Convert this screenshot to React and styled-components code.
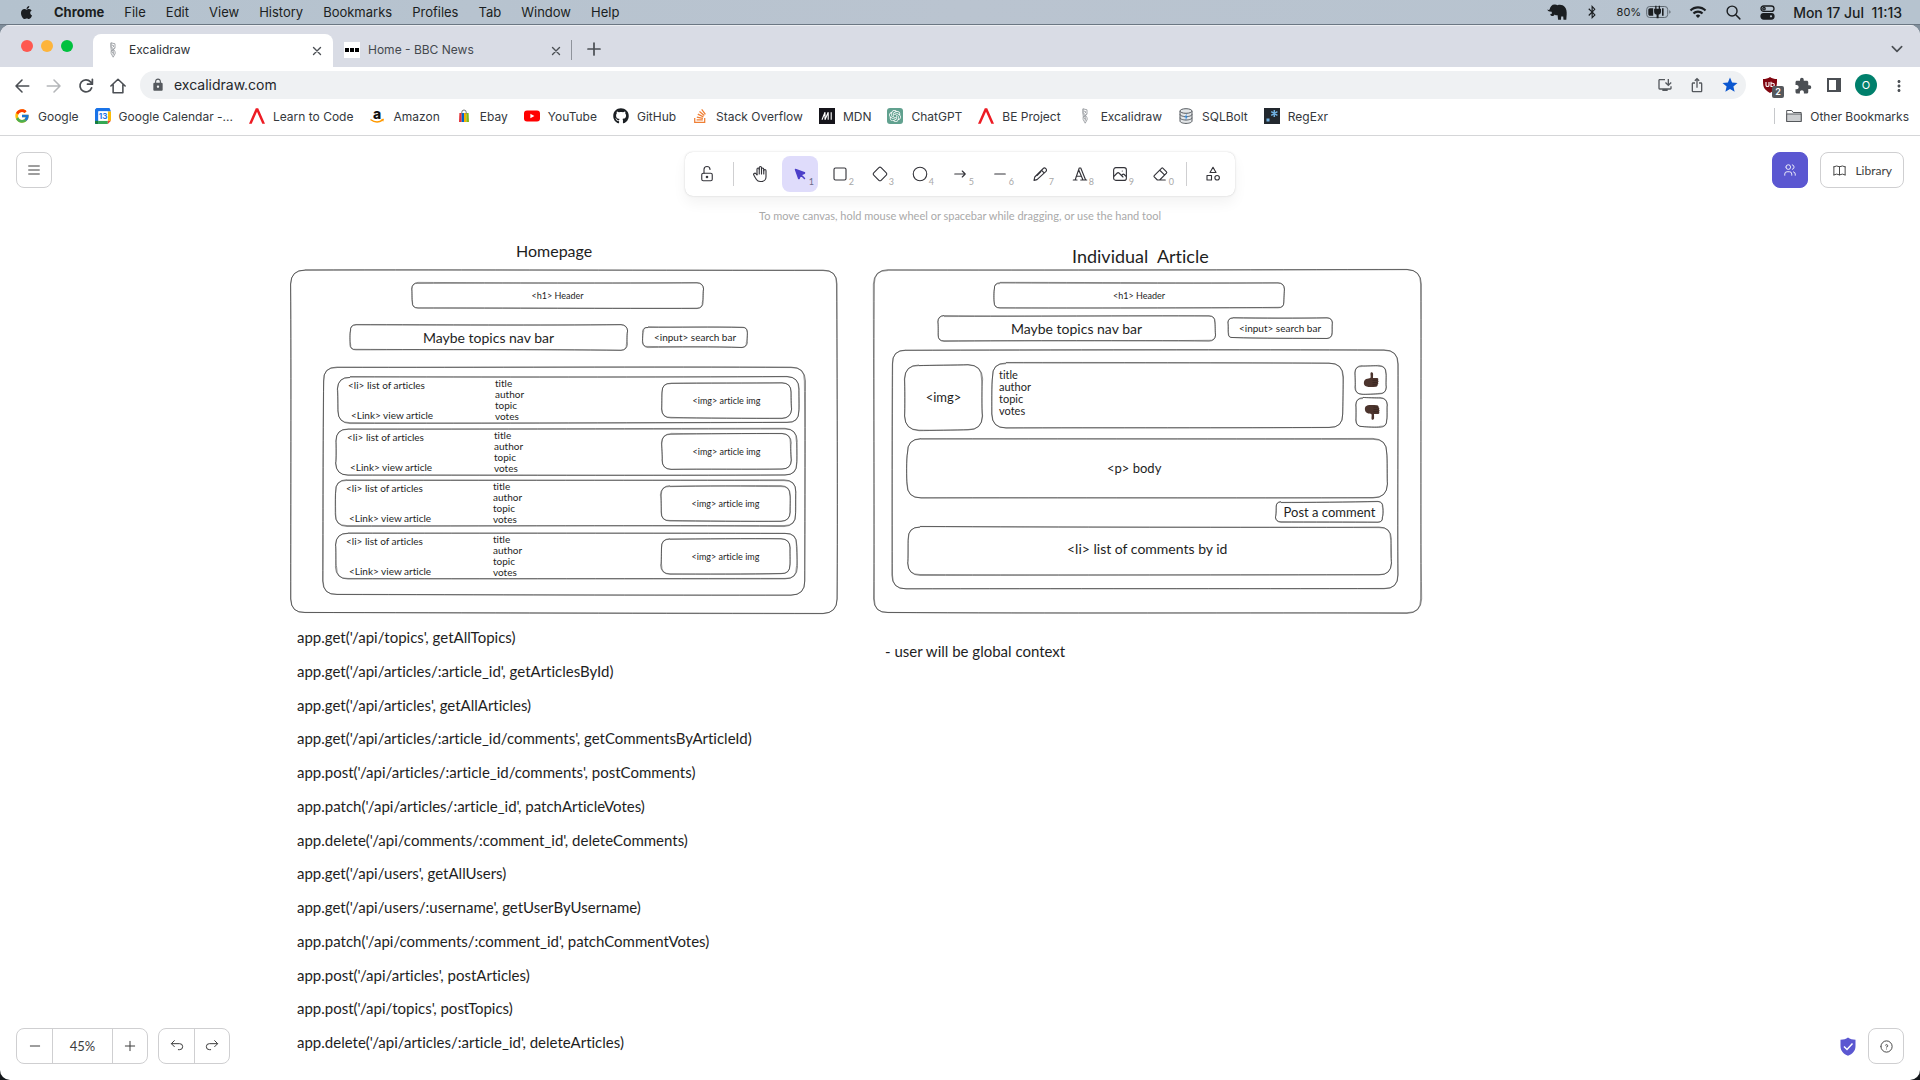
import React from "react";
import styled, { createGlobalStyle, css } from "styled-components";
import {
  TbLockOpen,
  TbHandStop,
  TbMenu2,
  TbUsers,
  TbBook,
  TbMinus,
  TbPlus,
  TbHelpCircle,
} from "react-icons/tb";
import { FcGoogle } from "react-icons/fc";
import { FaApple, FaStackOverflow, FaGithub, FaBluetoothB } from "react-icons/fa";
import { SiOpenai } from "react-icons/si";
import { MdStar, MdLock, MdWifi, MdMoreVert, MdInstallDesktop, MdIosShare, MdExtension } from "react-icons/md";

const SYSTEM = `Inter, "Liberation Sans", sans-serif`;
const UI = `Lato, "Open Sans", sans-serif`;
const HAND = `Lato, "Open Sans", sans-serif`;

const GlobalStyle = createGlobalStyle`
  *, *::before, *::after { box-sizing: border-box; }
  body { margin: 0; background: #14171b; font-family: ${SYSTEM}; }
  button, input { font: inherit; color: inherit; }
  button { border: 0; padding: 0; background: none; cursor: pointer; }
  a { color: inherit; text-decoration: none; }
  svg { display: block; flex: none; overflow: visible; }
`;

/* ---------- desktop and window ---------- */

const Desktop = styled.div`
  min-height: 100vh;
  display: flex;
  flex-direction: column;
`;

const MenuBar = styled.header`
  height: 25px;
  padding: 0 18px 0 19px;
  display: flex;
  align-items: center;
  justify-content: space-between;
  background: linear-gradient(90deg, #b4c2ce, #bac4d0 50%, #b6c3cf);
  border-bottom: 1px solid #6b7783;
  color: #1b1e21;
  font-size: 13px;
`;

const MenuGroup = styled.nav`
  display: flex;
  align-items: center;
  gap: 20px;
`;

const MenuItem = styled.button`
  font-weight: ${(p) => (p.$strong ? 700 : 400)};
  white-space: nowrap;
`;

const StatusGroup = styled.div`
  display: flex;
  align-items: center;
  gap: 18px;
  white-space: nowrap;
`;

const Battery = styled.span`
  display: flex;
  align-items: center;
  gap: 5px;
  font-size: 11px;
`;

const ClockText = styled.time`
  font-size: 14px;
  font-weight: 500;
  white-space: pre;
`;

const CornerBack = styled.div`
  flex: 1;
  display: flex;
  flex-direction: column;
  background: linear-gradient(#7f8d9a 0 50%, #14171b 50%);
`;

const Window = styled.div`
  flex: 1;
  display: flex;
  flex-direction: column;
  border-radius: 10px;
  overflow: hidden;
  background: #fff;
`;

const TabStrip = styled.div`
  height: 42px;
  padding: 8px 15px 0 21px;
  display: flex;
  background: #d9dce5;
  border-top: 1px solid #eceef2;
`;

const Lights = styled.div`
  display: flex;
  gap: 8px;
  padding-top: 6px;
  margin-right: 20px;
`;

const Light = styled.button`
  width: 12px;
  height: 12px;
  border-radius: 50%;
  background: ${(p) => p.$color};
`;

const Tab = styled.div`
  width: ${(p) => (p.$active ? 240 : 238)}px;
  height: 34px;
  padding: 0 ${(p) => (p.$active ? 11 : 10)}px 3px ${(p) => (p.$active ? 12 : 11)}px;
  display: flex;
  align-items: center;
  gap: 8px;
  border-radius: 8px 8px 0 0;
  background: ${(p) => (p.$active ? "#fff" : "transparent")};
  color: ${(p) => (p.$active ? "#2f3337" : "#44484e")};
  font-size: 12px;
`;

const TabTitle = styled.span`
  flex: 1;
`;

const TabEdge = styled.span`
  width: 1px;
  height: 20px;
  margin: 6px 14px 0 0;
  background: #8f939b;
`;

const PlainButton = styled.button`
  display: grid;
  place-items: center;
  width: ${(p) => p.$size || 16}px;
  height: ${(p) => p.$size || 16}px;
  color: ${(p) => p.$color || "#4b4f54"};
`;

const StripEnd = styled.div`
  flex: 1;
  display: flex;
  justify-content: space-between;
  align-items: center;
  padding-bottom: 3px;
`;

const Toolbar = styled.div`
  height: 36px;
  padding: 0 14px 1px 13px;
  display: flex;
  align-items: center;
  gap: 16px;
`;

const Omnibox = styled.label`
  flex: 1;
  height: 28px;
  margin-left: -1px;
  padding: 0 7px 0 11px;
  display: flex;
  align-items: center;
  gap: 16px;
  border-radius: 14px;
  background: #eff1f3;
  color: #55595e;
`;

const Address = styled.span`
  flex: 1;
  display: flex;
  align-items: center;
  gap: 9px;
`;

const UrlInput = styled.input`
  flex: 1;
  min-width: 0;
  height: 28px;
  padding: 0;
  border: 0;
  outline: 0;
  background: none;
  color: #24272b;
  font-size: 14px;
  line-height: 20px;
`;

const ExtensionIcon = styled.button`
  position: relative;
  width: 16px;
  height: 18px;
`;

const ExtensionBadge = styled.span`
  position: absolute;
  left: 10px;
  top: 10px;
  width: 12px;
  height: 12px;
  border-radius: 2px;
  background: #55585c;
  color: #fff;
  font-size: 9px;
  font-weight: 600;
  line-height: 12px;
  text-align: center;
`;

const Avatar = styled.button`
  width: 22px;
  height: 22px;
  margin: 0 -3px;
  border-radius: 50%;
  background: #00806c;
  color: #fff;
  font-size: 11px;
`;

const BookmarkBar = styled.nav`
  height: 33px;
  padding: 0 11px 6px 14px;
  display: flex;
  align-items: center;
  gap: 16px;
  border-bottom: 1px solid #d5d6d8;
  color: #34383d;
  font-size: 12px;
`;

const Bookmark = styled.a`
  display: flex;
  align-items: center;
  gap: 8px;
  white-space: nowrap;
`;

const OtherBookmarks = styled(Bookmark)`
  margin-left: auto;
  padding-left: 11px;
  border-left: 1px solid #c6c8cb;
`;

/* ---------- whiteboard ---------- */

const Board = styled.main`
  position: relative;
  flex: 1;
  min-height: 944px;
  display: flex;
  flex-direction: column;
  justify-content: space-between;
  padding: 16px;
  font-family: ${UI};
`;

const Scene = styled.div`
  position: absolute;
  inset: 0;
  overflow: hidden;
  color: #1e1e1e;
  font-family: ${HAND};
  font-variant-ligatures: none;
`;

const Node = styled.div`
  position: absolute;
  left: ${(p) => p.$x}px;
  top: ${(p) => p.$y}px;
  width: ${(p) => p.$w}px;
  height: ${(p) => p.$h}px;
  display: grid;
  place-items: center;
  font-size: ${(p) => p.$size || 10}px;
  line-height: 1;
  white-space: nowrap;
`;

const Outline = styled.svg`
  position: absolute;
  inset: 0;
  overflow: visible;
  fill: none;
  stroke: #1e1e1e;
`;

const Note = styled.div`
  position: absolute;
  left: ${(p) => p.$x}px;
  top: ${(p) => p.$y}px;
  font-size: ${(p) => p.$size}px;
  line-height: ${(p) => p.$line || 20}px;
  white-space: pre;
`;

const TopRow = styled.div`
  position: relative;
  display: grid;
  grid-template-columns: 1fr auto 1fr;
  align-items: start;
`;

const BottomRow = styled.div`
  position: relative;
  display: flex;
  gap: 10px;
  align-items: center;
`;

const outlined = css`
  border: 1px solid #cfcfd1;
  border-radius: 8px;
  background: #fff;
  color: #3d3d3d;
`;

const BoxButton = styled.button`
  ${outlined}
  min-width: 36px;
  height: 36px;
  padding: 0 ${(p) => (p.$wide ? 11 : 0)}px;
  display: flex;
  align-items: center;
  justify-content: center;
  gap: 8px;
  font-size: 12px;
`;

const ShareButton = styled(BoxButton)`
  border-color: #5b57d1;
  background: #5b57d1;
  color: #fff;
`;

const RightTools = styled.div`
  display: flex;
  justify-content: flex-end;
  gap: 12px;
`;

const CenterTools = styled.div`
  display: flex;
  flex-direction: column;
  align-items: center;
  gap: 12px;
`;

const ToolIsland = styled.div`
  display: flex;
  gap: 4px;
  padding: 4px;
  border-radius: 8px;
  background: #fff;
  box-shadow: 0 0 1px rgba(0, 0, 0, 0.18), 0 0 3px rgba(0, 0, 0, 0.08), 0 7px 14px rgba(0, 0, 0, 0.05);
`;

const ToolButton = styled.button`
  position: relative;
  width: 36px;
  height: 36px;
  display: grid;
  place-items: center;
  border-radius: 8px;
  background: ${(p) => (p.$active ? "#dfdcfb" : "transparent")};
  color: ${(p) => (p.$active ? "#4c3fc9" : "#34343a")};
`;

const KeyHint = styled.span`
  position: absolute;
  right: 4px;
  bottom: 4px;
  color: ${(p) => (p.$active ? "#6d6a86" : "#a8a8a8")};
  font-size: 9px;
  line-height: 12px;
`;

const Divider = styled.span`
  width: 1px;
  height: 24px;
  margin: 6px 4px;
  background: #cfcfd1;
`;

const Hint = styled.p`
  margin: 0;
  color: #a9a9a9;
  font-size: 11px;
  line-height: 16px;
  white-space: nowrap;
`;

const Segmented = styled.div`
  ${outlined}
  display: flex;
  height: 36px;
`;

const Segment = styled.button`
  width: ${(p) => p.$w || 35}px;
  display: grid;
  place-items: center;
  font-size: 13px;
  & + & { border-left: 1px solid #cfcfd1; }
`;

const Shield = styled.a`
  margin-left: auto;
  margin-right: 2px;
`;

/* ---------- drawings ---------- */

const Stroke = ({ size = 18, width = 1.5, children }) => (
  <svg width={size} height={size} viewBox="0 0 24 24" fill="none" stroke="currentColor" strokeWidth={width} strokeLinecap="round" strokeLinejoin="round">
    {children}
  </svg>
);

const Elephant = () => (
  <svg width="20" height="18" viewBox="0 0 20 18" fill="#1b1e21">
    <path d="M.3 6.2c.6.7 1.500.9 2.300.4C3.300 3.400 5 1.300 8 1.500c1 .1 1.800.4 2.500.7 2.600-.9 5.600-.3 7.300 1.800 1.700 2 2 4.500 1.900 7l-.4 5.800h-2.800l-.3-3.300h-2l-.2 3.300h-2.900l-.5-4.600c-1.200.2-2.100-.1-2.900-.8-.7 1-1.600 1.800-2.800 1.600-1.200-.2-1.700-1.200-1.500-2.300.7.500 1.300.4 1.500-.4l-.2-1.600C2.400 8.800.7 8.100.3 6.200z" />
  </svg>
);

const BatteryIcon = () => (
  <svg width="25" height="14" viewBox="0 0 25 14">
    <rect x=".7" y="1.500" width="21" height="11" rx="3" fill="none" stroke="#5e6871" />
    <path d="M23.300 5.300v3.400c.9-.4 1.200-1 1.200-1.700s-.3-1.300-1.200-1.700z" fill="#5e6871" />
    <path d="M4 3.200h3.200v7.600H4C3 10.800 2.300 10 2.300 9V5c0-1 .7-1.800 1.700-1.800zM16 3.200h1.600v7.600H16z" fill="#1b1e21" />
    <path d="M9.200.8h1.300v3h2.200v-3H14v3h1v2.700c0 1.800-.9 2.900-2.400 3.200v3.500h-2V9.700C9 9.400 8.100 8.300 8.100 6.500V3.800h1.100z" fill="#1b1e21" />
  </svg>
);

const ControlCentre = () => (
  <svg width="15" height="15" viewBox="0 0 15 15" fill="none" stroke="#1b1e21" strokeWidth="1.300">
    <rect x="1" y="1" width="13" height="5.400" rx="2.700" />
    <circle cx="4" cy="3.700" r="1.200" />
    <rect x="1" y="8.600" width="13" height="5.400" rx="2.700" fill="#1b1e21" />
    <circle cx="11" cy="11.300" r="1.100" fill="#b6c3cf" stroke="none" />
  </svg>
);

const ExcalidrawMark = () => (
  <svg width="16" height="16" viewBox="0 0 16 16" fill="none" stroke="#9a9da1" strokeWidth=".9">
    <path d="M6 .8l4 1v4.400L6.400 9.400 6 6zM6 .8v4.700l4 3.700.2 2.300-2 3.700-2-3.600L6 9.300l3.600-3.500M7 3l2 1-1.600 1.500M7 10l2.300 1.600M8.200 8v4.800" />
  </svg>
);

const BbcMark = () => (
  <svg width="16" height="16" viewBox="0 0 16 16">
    <path fill="#fff" d="M0 0h16v16H0z" />
    <path d="M1 6h4v4H1zM6 6h4v4H6zM11 6h4v4h-4z" />
  </svg>
);

const CalendarMark = () => (
  <svg width="16" height="16" viewBox="0 0 16 16">
    <path fill="#1a73e8" d="M1.500 0h13L16 3.500H3.500V16H0V1.500z" />
    <path fill="#fbbc04" d="M12.800 3.500H16v9.300h-3.200z" />
    <path fill="#34a853" d="M3.300 12.800h9.500V16H3.300z" />
    <path fill="#188038" d="M0 12.800h3.300V16H1.500A1.500 1.500 0 010 14.500z" />
    <path fill="#ea4335" d="M12.800 12.800H16L12.800 16z" />
    <path fill="#fff" d="M3.300 3.300h9.500v9.500H3.300z" />
    <text x="8" y="10.900" fill="#1a73e8" fontSize="8" fontWeight="700" textAnchor="middle">13</text>
  </svg>
);

const PeakMark = () => (
  <svg width="16" height="16" viewBox="0 0 16 16">
    <path d="M6.800.300h2.400L16 15.700h-2.700L8 3.800 2.700 15.700H0z" fill="#ed1c24" />
  </svg>
);

const AmazonMark = () => (
  <svg width="16" height="16" viewBox="0 0 16 16">
    <text x="8" y="10.500" fontSize="14" fontWeight="800" textAnchor="middle" fill="#111">a</text>
    <path d="M1.500 11.500c4 3 8.500 3 12 .7" fill="none" stroke="#f90" strokeWidth="1.500" />
    <path d="M12 11l3-.3-.8 3z" fill="#f90" />
  </svg>
);

const EbayMark = () => (
  <svg width="16" height="16" viewBox="0 0 16 16">
    <path d="M3.400 5h2.300v9H3z" fill="#e53238" />
    <path d="M5.700 5H8v9H5.700z" fill="#0064d2" />
    <path d="M8 5h2.300v9H8z" fill="#f5af02" />
    <path d="M10.300 5h2.300l.4 9h-2.700z" fill="#86b817" />
    <path d="M5.800 6V4.200a2.200 2.200 0 014.400 0V6" fill="none" stroke="#777" />
  </svg>
);

const YoutubeMark = () => (
  <svg width="16" height="16" viewBox="0 0 16 16">
    <rect y="2.500" width="16" height="11" rx="3" fill="#f00" />
    <path d="M6.400 5.700v4.600l4-2.300z" fill="#fff" />
  </svg>
);

const MdnMark = () => (
  <svg width="16" height="16" viewBox="0 0 16 16">
    <path d="M0 0h16v16H0z" fill="#15141a" />
    <path d="M3 11.700L6 4.300v7.400l3.200-7.400v7.400M12.200 4.300v7.400" fill="none" stroke="#fff" strokeWidth="1.100" />
  </svg>
);

const Tile = styled.span`
  width: 16px;
  height: 16px;
  display: grid;
  place-items: center;
  border-radius: 3px;
  background: #61a18f;
  color: #fff;
`;

const SqlMark = () => (
  <svg width="16" height="16" viewBox="0 0 16 16" fill="#e3e6e8" stroke="#565b60">
    <path d="M2 3v10c0 1.400 2.700 2.400 6 2.400s6-1 6-2.400V3" />
    <ellipse cx="8" cy="3" rx="6" ry="2.300" />
    <path d="M2 6.300c0 1.300 2.700 2.300 6 2.300s6-1 6-2.300M2 9.700C2 11 4.700 12 8 12s6-1 6-2.300" fill="none" />
    <path d="M8.800 5.500L6.400 9.400h1.500l-.6 3.200 2.500-4.200H8.300z" fill="#3b8ede" stroke="none" />
  </svg>
);

const RegexMark = () => (
  <svg width="16" height="16" viewBox="0 0 16 16">
    <path d="M0 0h16v16H0z" fill="#22282e" />
    <path d="M2.500 10.500h3v3h-3z" fill="#70b0e0" />
    <path d="M10.300 2v7M7.200 3.700l6.200 3.600M13.400 3.700L7.200 7.300" stroke="#70b0e0" strokeWidth="1.500" />
  </svg>
);

const FolderIcon = () => (
  <svg width="16" height="16" viewBox="0 0 16 16" fill="none" stroke="#55585c">
    <path d="M.7 2.500h5l1.500 2h8v9H.7z" fill="#fff" />
    <path d="M.7 6h14.500v7.500H.7z" fill="#cdcfd1" />
  </svg>
);

const UblockIcon = () => (
  <svg width="16" height="18" viewBox="0 0 16 18">
    <path d="M8 1c2 1.500 4.300 2 7 2 0 7 0 10-7 14C1 13 1 10 1 3c2.700 0 5-.5 7-2z" fill="#800610" />
    <path d="M4 6v3.200c0 1.800 3 1.800 3 0V6M9 5.800v4.700h1.600c2.300 0 2.300-3.200 0-3.200H9" fill="none" stroke="#fff" strokeWidth="1.100" />
  </svg>
);

const ThumbShape = () => (
  <>
    <path d="M8.300.2c1.300-.3 1.900.8 1.800 2.200L10 6h4.100c1.400.1 1.600 1.600.8 2.200.9.500.8 1.900 0 2.300.7.600.5 1.900-.4 2.200.3 1-.3 1.900-1.500 2-2.700.3-5.300.4-7.600.2-2.400-.2-4.300-1.100-4.500-3.100-.2-2.300.6-4 2.200-4.700 1.500-.7 3.400-.6 4.200-1.100.6-.6.3-2.300.2-3.600-.1-1 .1-2 .8-2.200z" />
    <path d="M9.500 8.300h5.100M9.500 10.600h5.100M9.500 12.800h4.600" stroke="#2d1d18" strokeWidth=".5" />
  </>
);

const ThumbUp = () => (
  <svg width="16" height="16" viewBox="0 0 16 16" fill="#4c342d"><ThumbShape /></svg>
);

const ThumbDown = () => (
  <svg width="16" height="16" viewBox="0 0 16 16" fill="#4c342d"><g transform="matrix(1 0 0 -1 0 15)"><ThumbShape /></g></svg>
);

/* A rounded rectangle with slightly bowed sides, as if drawn by hand. */
const sketch = (w, h, r, seed) => {
  let s = seed;
  const j = (a) => {
    s = (s * 9301 + 49297) % 233280;
    return (s / 233280 - 0.5) * 2 * a;
  };
  const a = 0.7;
  return [
    `M${r} ${j(a)}`,
    `C${w * 0.3} ${j(a)} ${w * 0.7} ${j(a)} ${w - r} ${j(a)}`,
    `Q${w} 0 ${w + j(a)} ${r}`,
    `C${w + j(a)} ${h * 0.3} ${w + j(a)} ${h * 0.7} ${w + j(a)} ${h - r}`,
    `Q${w} ${h} ${w - r} ${h + j(a)}`,
    `C${w * 0.7} ${h + j(a)} ${w * 0.3} ${h + j(a)} ${r} ${h + j(a)}`,
    `Q0 ${h} ${j(a)} ${h - r}`,
    `C${j(a)} ${h * 0.7} ${j(a)} ${h * 0.3} ${j(a)} ${r}`,
    `Q0 0 ${r} ${j(a)}`,
  ].join("");
};

const Shape = ({ x, y, w, h, size, children }) => {
  const r = Math.min(14, Math.round(Math.min(w, h) * 0.25));
  return (
    <Node $x={x} $y={y} $w={w} $h={h} $size={size}>
      <Outline width={w} height={h} aria-hidden="true">
        <path d={sketch(w, h, r, x * 7 + y)} strokeWidth=".5" />
        <path d={sketch(w, h, r, x + y * 13)} strokeWidth=".5" />
      </Outline>
      {children}
    </Node>
  );
};

/* ---------- data ---------- */

const menus = ["File", "Edit", "View", "History", "Bookmarks", "Profiles", "Tab", "Window", "Help"];

const bookmarks = [
  ["Google", <FcGoogle size={16} />],
  ["Google Calendar -...", <CalendarMark />],
  ["Learn to Code", <PeakMark />],
  ["Amazon", <AmazonMark />],
  ["Ebay", <EbayMark />],
  ["YouTube", <YoutubeMark />],
  ["GitHub", <FaGithub size={16} color="#1b1f23" />],
  ["Stack Overflow", <FaStackOverflow size={16} color="#ef7f35" />],
  ["MDN", <MdnMark />],
  ["ChatGPT", <Tile><SiOpenai size={12} /></Tile>],
  ["BE Project", <PeakMark />],
  ["Excalidraw", <ExcalidrawMark />],
  ["SQLBolt", <SqlMark />],
  ["RegExr", <RegexMark />],
];

const tools = [
  ["Hand", "", <TbHandStop size={18} strokeWidth={1.5} />],
  ["Selection", "1", <Stroke key="s"><path d="M6 6l4.153 11.793a.365.365 0 00.331.207.366.366 0 00.332-.207L13 13l4.787-1.994a.355.355 0 00.213-.323.355.355 0 00-.213-.323L6 6zM13.500 13.500L18 18" fill="currentColor" strokeWidth="2" /></Stroke>],
  ["Rectangle", "2", <Stroke><rect x="4" y="4" width="16" height="16" rx="2" /></Stroke>],
  ["Diamond", "3", <Stroke><path d="M10.500 20.400l-6.900-6.900c-.781-.781-.781-2.219 0-3l6.900-6.900c.781-.781 2.219-.781 3 0l6.900 6.900c.781.781.781 2.219 0 3l-6.900 6.900c-.781.781-2.219.781-3 0z" /></Stroke>],
  ["Ellipse", "4", <Stroke><circle cx="12" cy="12" r="9" /></Stroke>],
  ["Arrow", "5", <Stroke><path d="M5 12h14M15 16l4-4M15 8l4 4" /></Stroke>],
  ["Line", "6", <Stroke><path d="M5 12h14" /></Stroke>],
  ["Draw", "7", <Stroke><path d="M8 19.500l-4 1 1-4.500L16 5a2.400 2.400 0 014 3.500zM14 7l3.500 3.500M8 14l5-5" /></Stroke>],
  ["Text", "8", <Stroke><path d="M3 20h5M13 20h8M10.200 6.300L16 20M6.900 15h6.900M5.500 20L11 4h2l6.500 16" /></Stroke>],
  ["Image", "9", <Stroke><path d="M15 8h.01" /><rect x="3.500" y="3.500" width="17" height="17" rx="3" /><path d="M4 15l4-4c.928-.893 2.072-.893 3 0l5 5M14 14l1-1c.928-.893 2.072-.893 3 0l2 2" /></Stroke>],
  ["Eraser", "0", <Stroke><path d="M19 20H8.500l-4.210-4.300a1 1 0 010-1.410l10-10a1 1 0 011.410 0l5 5a1 1 0 010 1.410L11.500 20M18 13.300L11.700 7" /></Stroke>],
];

const articleRows = [
  { x: 338, y: 241, imgX: 662, imgY: 247, textX: 348 },
  { x: 336, y: 293, imgX: 662, imgY: 298, textX: 347 },
  { x: 335, y: 344, imgX: 661, imgY: 350, textX: 346 },
  { x: 336, y: 397, imgX: 661, imgY: 403, textX: 346 },
];

const endpoints = [
  "app.get('/api/topics', getAllTopics)",
  "app.get('/api/articles/:article_id', getArticlesById)",
  "app.get('/api/articles', getAllArticles)",
  "app.get('/api/articles/:article_id/comments', getCommentsByArticleId)",
  "app.post('/api/articles/:article_id/comments', postComments)",
  "app.patch('/api/articles/:article_id', patchArticleVotes)",
  "app.delete('/api/comments/:comment_id', deleteComments)",
  "app.get('/api/users', getAllUsers)",
  "app.get('/api/users/:username', getUserByUsername)",
  "app.patch('/api/comments/:comment_id', patchCommentVotes)",
  "app.post('/api/articles', postArticles)",
  "app.post('/api/topics', postTopics)",
  "app.delete('/api/articles/:article_id', deleteArticles)",
];

/* ---------- page ---------- */

const Homepage = () => (
  <>
    <Note $x={516} $y={105} $size={16}>Homepage</Note>
    <Shape x={291} y={134} w={546} h={343} />
    <Shape x={412} y={147} w={291} h={25} size={9}>{"<h1> Header"}</Shape>
    <Shape x={350} y={189} w={277} h={25} size={14}>Maybe topics nav bar</Shape>
    <Shape x={643} y={191} w={104} h={20}>{"<input> search bar"}</Shape>
    <Shape x={323} y={231} w={482} h={228} />
    {articleRows.map((row) => (
      <React.Fragment key={row.y}>
        <Shape x={row.x} y={row.y} w={461} h={46} />
        <Note $x={row.textX} $y={row.y + 2} $size={10} $line={12}>{"<li> list of articles"}</Note>
        <Note $x={row.textX + 3} $y={row.y + 32} $size={10} $line={12}>{"<Link> view article"}</Note>
        <Note $x={row.textX + 147} $y={row.y + 1} $size={10} $line={11}>{"title\nauthor\ntopic\nvotes"}</Note>
        <Shape x={row.imgX} y={row.imgY} w={129} h={35} size={9}>{"<img> article img"}</Shape>
      </React.Fragment>
    ))}
  </>
);

const ArticlePage = () => (
  <>
    <Note $x={1072} $y={110} $size={18}>Individual  Article</Note>
    <Shape x={874} y={134} w={547} h={343} />
    <Shape x={994} y={147} w={290} h={25} size={9}>{"<h1> Header"}</Shape>
    <Shape x={938} y={180} w={277} h={25} size={14}>Maybe topics nav bar</Shape>
    <Shape x={1228} y={182} w={104} h={20}>{"<input> search bar"}</Shape>
    <Shape x={892} y={214} w={506} h={239} />
    <Shape x={905} y={229} w={77} h={65} size={13}>{"<img>"}</Shape>
    <Shape x={992} y={227} w={351} h={65} />
    <Note $x={999} $y={233} $size={11} $line={12}>{"title\nauthor\ntopic\nvotes"}</Note>
    <Shape x={1355} y={230} w={31} h={28}><ThumbUp /></Shape>
    <Shape x={1356} y={262} w={31} h={29}><ThumbDown /></Shape>
    <Shape x={907} y={303} w={480} h={59} />
    <Note $x={1107} $y={322} $size={13}>{"<p> body"}</Note>
    <Shape x={1276} y={366} w={107} h={20} size={13}>Post a comment</Shape>
    <Shape x={908} y={391} w={483} h={48} />
    <Note $x={1067} $y={403} $size={14}>{"<li> list of comments by id"}</Note>
    <Note $x={885} $y={505} $size={15}>- user will be global context</Note>
  </>
);

export default function App() {
  return (
    <Desktop>
      <GlobalStyle />
      <MenuBar>
        <MenuGroup>
          <FaApple size={15} />
          <MenuItem $strong>Chrome</MenuItem>
          {menus.map((m) => <MenuItem key={m}>{m}</MenuItem>)}
        </MenuGroup>
        <StatusGroup>
          <Elephant />
          <FaBluetoothB size={14} />
          <Battery>80%<BatteryIcon /></Battery>
          <MdWifi size={18} />
          <Stroke size={17} width={2}><circle cx="10" cy="10" r="7" /><path d="M15.500 15.500L21 21" /></Stroke>
          <ControlCentre />
          <ClockText>Mon 17 Jul  11:13</ClockText>
        </StatusGroup>
      </MenuBar>
      <CornerBack>
        <Window>
          <TabStrip>
            <Lights>
              <Light $color="#fe5850" aria-label="Close window" />
              <Light $color="#fdb43b" aria-label="Minimise window" />
              <Light $color="#00c13e" aria-label="Zoom window" />
            </Lights>
            <Tab $active>
              <ExcalidrawMark />
              <TabTitle>Excalidraw</TabTitle>
              <PlainButton $size={12} aria-label="Close tab"><Stroke size={14} width={2.4}><path d="M6 6l12 12M18 6L6 18" /></Stroke></PlainButton>
            </Tab>
            <Tab>
              <BbcMark />
              <TabTitle>Home - BBC News</TabTitle>
              <PlainButton $size={12} aria-label="Close tab"><Stroke size={14} width={2.4}><path d="M6 6l12 12M18 6L6 18" /></Stroke></PlainButton>
            </Tab>
            <TabEdge />
            <StripEnd>
              <PlainButton aria-label="New tab"><Stroke size={16} width={2.6}><path d="M12 3v18M3 12h18" /></Stroke></PlainButton>
              <PlainButton aria-label="Search tabs"><Stroke size={14} width={2.8}><path d="M4 8l8 8 8-8" /></Stroke></PlainButton>
            </StripEnd>
          </TabStrip>
          <Toolbar>
            <PlainButton aria-label="Back"><Stroke size={18} width={2.1}><path d="M21 12H4M12 4l-8 8 8 8" /></Stroke></PlainButton>
            <PlainButton $color="#b4b6b9" aria-label="Forward"><Stroke size={18} width={2.1}><path d="M3 12h17M12 4l8 8-8 8" /></Stroke></PlainButton>
            <PlainButton aria-label="Reload"><Stroke size={18} width={2.3}><path d="M19.500 14.500A8 8 0 1118 6.500L20.500 9M20.500 3v6.500H14" /></Stroke></PlainButton>
            <PlainButton aria-label="Home"><Stroke size={18} width={2.1}><path d="M2.500 12L12 3l9.500 9M5.500 10v11h13V10" /></Stroke></PlainButton>
            <Omnibox>
              <Address>
                <MdLock size={14} />
                <UrlInput type="text" defaultValue="excalidraw.com" aria-label="Address" />
              </Address>
              <MdInstallDesktop size={16} />
              <MdIosShare size={16} />
              <MdStar size={18} color="#0b57d0" />
            </Omnibox>
            <ExtensionIcon aria-label="Content blocker">
              <UblockIcon />
              <ExtensionBadge>2</ExtensionBadge>
            </ExtensionIcon>
            <PlainButton aria-label="Extensions"><MdExtension size={18} /></PlainButton>
            <PlainButton aria-label="Side panel">
              <svg width="14" height="14" viewBox="0 0 14 14"><path d="M1 1h12v12H1z" fill="none" stroke="#4b4f54" strokeWidth="2" /><path d="M9 1h4v12H9z" fill="#4b4f54" /></svg>
            </PlainButton>
            <Avatar>O</Avatar>
            <PlainButton aria-label="Menu"><MdMoreVert size={18} /></PlainButton>
          </Toolbar>
          <BookmarkBar>
            {bookmarks.map(([label, icon]) => (
              <Bookmark href="#" key={label}>{icon}{label}</Bookmark>
            ))}
            <OtherBookmarks href="#"><FolderIcon />Other Bookmarks</OtherBookmarks>
          </BookmarkBar>
          <Board>
            <Scene>
              <Homepage />
              <ArticlePage />
              {endpoints.map((line, i) => (
                <Note key={line} $x={297} $y={Math.round(491 + i * 33.75)} $size={15}>{line}</Note>
              ))}
            </Scene>
            <TopRow>
              <div><BoxButton aria-label="Main menu"><TbMenu2 size={16} strokeWidth={1.5} /></BoxButton></div>
              <CenterTools>
                <ToolIsland>
                  <ToolButton aria-label="Keep tool active"><TbLockOpen size={18} strokeWidth={1.5} /></ToolButton>
                  <Divider />
                  {tools.map(([name, key, icon]) => (
                    <ToolButton key={name} aria-label={name} $active={key === "1"}>
                      {icon}
                      {key && <KeyHint $active={key === "1"}>{key}</KeyHint>}
                    </ToolButton>
                  ))}
                  <Divider />
                  <ToolButton aria-label="More tools">
                    <Stroke><path d="M12 3l4 7H8zM4 14h6v6H4z" /><circle cx="17.500" cy="17" r="3" /></Stroke>
                  </ToolButton>
                </ToolIsland>
                <Hint>To move canvas, hold mouse wheel or spacebar while dragging, or use the hand tool</Hint>
              </CenterTools>
              <RightTools>
                <ShareButton aria-label="Live collaboration"><TbUsers size={14} strokeWidth={1.5} /></ShareButton>
                <BoxButton $wide><TbBook size={15} strokeWidth={1.5} />Library</BoxButton>
              </RightTools>
            </TopRow>
            <BottomRow>
              <Segmented>
                <Segment aria-label="Zoom out"><TbMinus size={16} strokeWidth={1.5} /></Segment>
                <Segment $w={60}>45%</Segment>
                <Segment aria-label="Zoom in"><TbPlus size={16} strokeWidth={1.5} /></Segment>
              </Segmented>
              <Segmented>
                <Segment aria-label="Undo"><Stroke size={16}><path d="M8 4L3.500 8.500 8 13M4 8.500h12a4.500 4.500 0 010 9h-2" /></Stroke></Segment>
                <Segment aria-label="Redo"><Stroke size={16}><path d="M16 4l4.500 4.500L16 13M20 8.500H8a4.500 4.500 0 000 9h2" /></Stroke></Segment>
              </Segmented>
              <Shield href="#" aria-label="Encrypted">
                <svg width="16" height="19" viewBox="0 0 16 19"><path d="M8 .5c2 1.500 4.500 2.200 7.500 2.200V9c0 5-3 8-7.500 9.700C3.500 17 .5 14 .5 9V2.700C3.500 2.700 6 2 8 .5z" fill="#5b57d1" /><path d="M4 9.500l3 3 5.500-6" fill="none" stroke="#fff" strokeWidth="1.500" /></svg>
              </Shield>
              <BoxButton aria-label="Help"><TbHelpCircle size={15} strokeWidth={1.5} /></BoxButton>
            </BottomRow>
          </Board>
        </Window>
      </CornerBack>
    </Desktop>
  );
}
